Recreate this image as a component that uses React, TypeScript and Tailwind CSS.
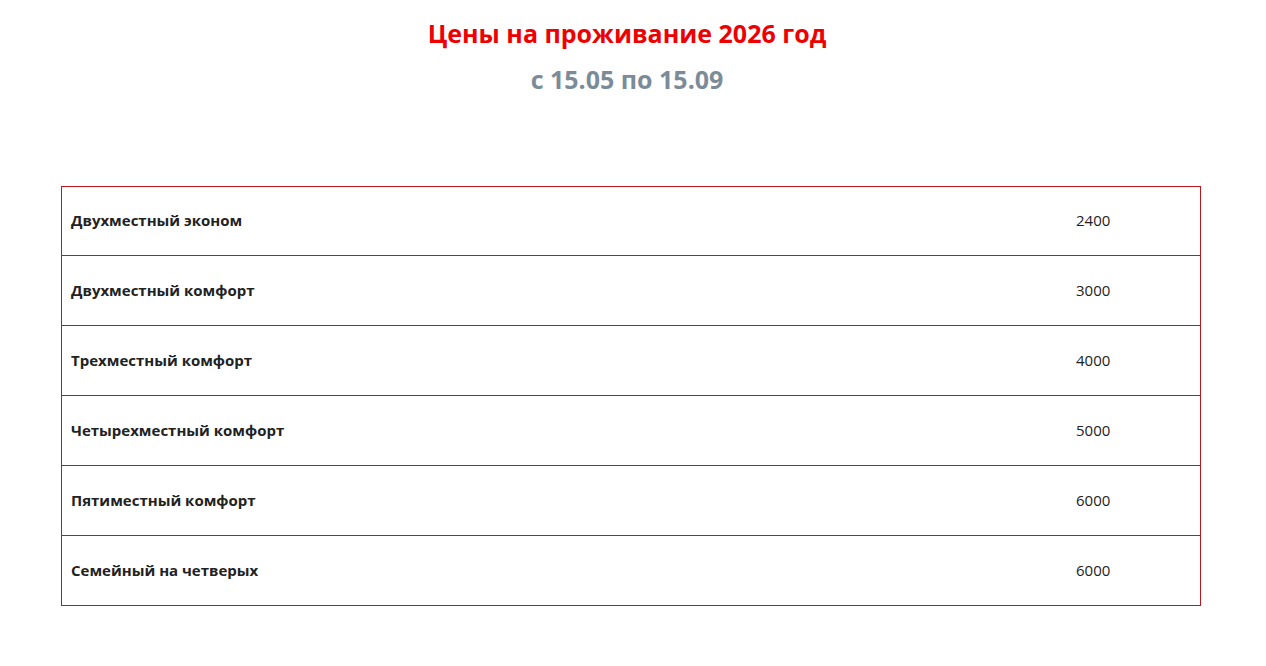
import React from 'react';

const rows: [string, string][] = [
  ['Двухместный эконом', '2400'],
  ['Двухместный комфорт', '3000'],
  ['Трехместный комфорт', '4000'],
  ['Четырехместный комфорт', '5000'],
  ['Пятиместный комфорт', '6000'],
  ['Семейный на четверых', '6000'],
];

export default function App() {
  return (
    <div className="min-h-screen bg-white font-['Open_Sans',sans-serif] text-[#222]">
      <div className="pt-[15px] pr-[12px] text-center">
        <h1 className="text-[25px] leading-[36px] font-bold text-[#ee0000]">Цены на проживание 2026 год</h1>
        <h2 className="mt-[11px] text-[25px] leading-[34px] font-bold text-[#7b8c98]">с 15.05 по 15.09</h2>
      </div>

      <div className="mx-[61px] mt-[90px] w-[1140px] border border-[#c0161c]">
        {rows.map(([name, price], i) => (
          <div
            key={i}
            className={`grid grid-cols-[1fr_134px] items-center text-[15px] ${i > 0 ? 'h-[70px] border-t border-[#c0161c] pb-[1px]' : 'h-[68px] pb-[2px]'}`}
          >
            <div className="px-[9px] font-bold">{name}</div>
            <div className="px-[10px]">{price}</div>
          </div>
        ))}
      </div>
    </div>
  );
}
